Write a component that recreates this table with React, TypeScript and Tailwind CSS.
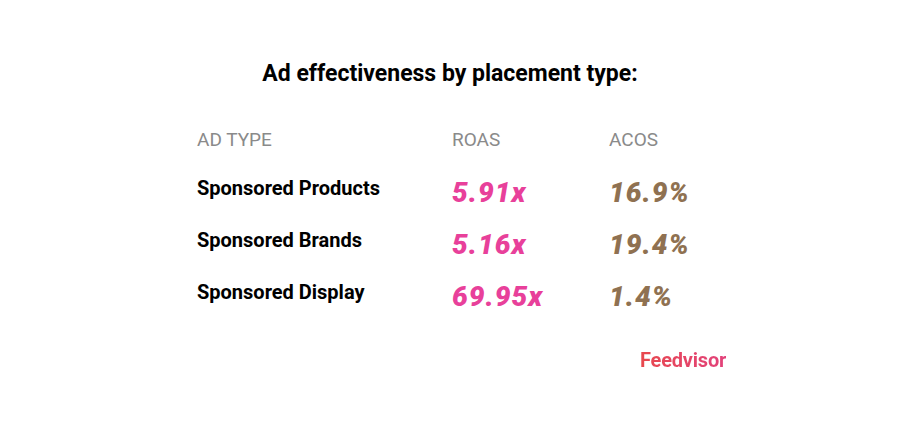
const rows = [
  { type: 'Sponsored Products', roas: '5.91x', acos: '16.9%' },
  { type: 'Sponsored Brands', roas: '5.16x', acos: '19.4%' },
  { type: 'Sponsored Display', roas: '69.95x', acos: '1.4%' },
];

export default function App() {
  return (
    <div className="w-[900px] h-[424px] bg-white font-['Roboto',sans-serif] flex flex-col">
      <h1 className="mt-[60px] text-center text-[23px] leading-[28px] font-bold text-black">
        Ad effectiveness by placement type:
      </h1>

      <div className="mt-[40px] ml-[197px] grid grid-cols-[255px_157px_auto]">
        <div className="text-[19px] leading-[24px] text-[#8a8a8a]">AD TYPE</div>
        <div className="text-[19px] leading-[24px] text-[#8a8a8a]">ROAS</div>
        <div className="text-[19px] leading-[24px] text-[#8a8a8a]">ACOS</div>

        {rows.map((r, i) => (
          <div key={r.type} className={`col-span-3 grid grid-cols-subgrid h-[52px] ${i === 0 ? 'mt-[24px]' : ''}`}>
            <div className="text-[20px] leading-[24px] font-bold text-black">{r.type}</div>
            <div className="text-[28px] leading-[34px] font-black italic tracking-[1px] text-[#e8409a]">{r.roas}</div>
            <div className="text-[28px] leading-[34px] font-black italic tracking-[1px] text-[#8f7151]">{r.acos}</div>
          </div>
        ))}
      </div>

      <div className="mt-[15px] ml-[640px]">
        <span className="text-[20px] leading-[26px] font-bold tracking-[-0.2px] bg-gradient-to-r from-[#e8484c] to-[#e2417a] bg-clip-text text-transparent">
          Feedvisor
        </span>
      </div>
    </div>
  );
}
